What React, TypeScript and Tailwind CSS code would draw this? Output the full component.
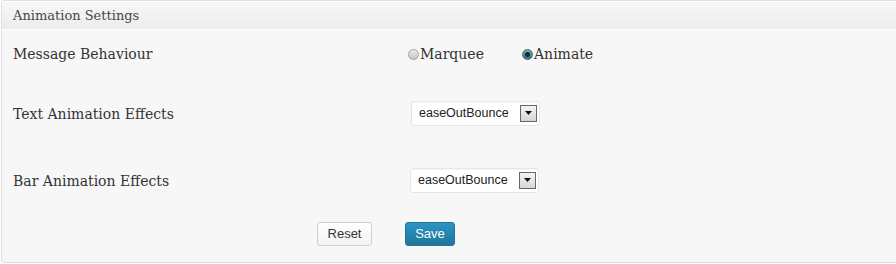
import React from "react";

function Radio({ checked }: { checked?: boolean }) {
  return (
    <span className={`inline-flex items-center justify-center w-[11px] h-[11px] rounded-full border mr-px ${checked ? "border-[#3a6f7a] bg-gradient-to-b from-[#7fa9b3] to-[#41707b]" : "border-[#a0a0a0] bg-gradient-to-b from-[#e8e8e8] to-[#c8c8c8]"}`}>
      {checked && <span className="w-[5px] h-[5px] rounded-full bg-[#0d2f38]" />}
    </span>
  );
}

function Select() {
  return (
    <div className="w-[129px] h-[25px] bg-white border border-[#e6e6e6] rounded-[3px] flex items-center justify-between pl-[7px] pr-[2px] shadow-[inset_0_1px_1px_rgba(0,0,0,0.04)]">
      <span className="text-[12.5px] text-[#222] font-['Liberation_Sans',Arial,sans-serif]">easeOutBounce</span>
      <span className="w-[17px] h-[17px] border border-[#666] bg-gradient-to-b from-[#f4f4f4] to-[#d6d6d6] flex items-center justify-center">
        <svg width="7" height="4" viewBox="0 0 7 4"><path d="M0 0h7L3.5 4z" fill="#111" /></svg>
      </span>
    </div>
  );
}

export default function App() {
  const serif = "font-['DejaVu_Serif',Georgia,serif]";
  return (
    <div className="w-[896px] h-[264px] bg-white">
      <div className="ml-px mr-[-4px] h-[263px] border border-[#dfdfdf] rounded-[3px] bg-[#f7f7f7] flex flex-col overflow-hidden">
        <div className={`h-[29px] bg-gradient-to-b from-[#f7f7f7] to-[#ececec] border-t border-white border-b border-[#dcdcdc] flex items-center pl-[11px] ${serif} text-[13px] text-[#464646]`}>
          Animation Settings
        </div>
        <div className={`flex items-center h-[44px] pt-[4px] ${serif} text-[14px] text-[#333]`}>
          <div className="w-[406px] pl-[11px]">Message Behaviour</div>
          <label className="flex items-center w-[114px]"><Radio />Marquee</label>
          <label className="flex items-center"><Radio checked />Animate</label>
        </div>
        <div className={`flex items-center h-[78px] ${serif} text-[14px] text-[#333]`}>
          <div className="w-[409px] pl-[11px] pt-[3px]">Text Animation Effects</div>
          <Select />
        </div>
        <div className={`flex items-center h-[56px] ${serif} text-[14px] text-[#333]`}>
          <div className="w-[408px] pl-[11px] pt-[3px]">Bar Animation Effects</div>
          <Select />
        </div>
        <div className="flex items-center h-[52px] pl-[315px] gap-[33px] font-['Liberation_Sans',Arial,sans-serif] text-[13px]">
          <button className="w-[55px] h-[24px] rounded-[3px] border border-[#cfcfcf] bg-gradient-to-b from-white to-[#f2f2f2] text-[#333]">Reset</button>
          <button className="w-[50px] h-[24px] rounded-[3px] border border-[#21759b] bg-gradient-to-b from-[#2a95c5] to-[#21759b] text-white">Save</button>
        </div>
      </div>
    </div>
  );
}
